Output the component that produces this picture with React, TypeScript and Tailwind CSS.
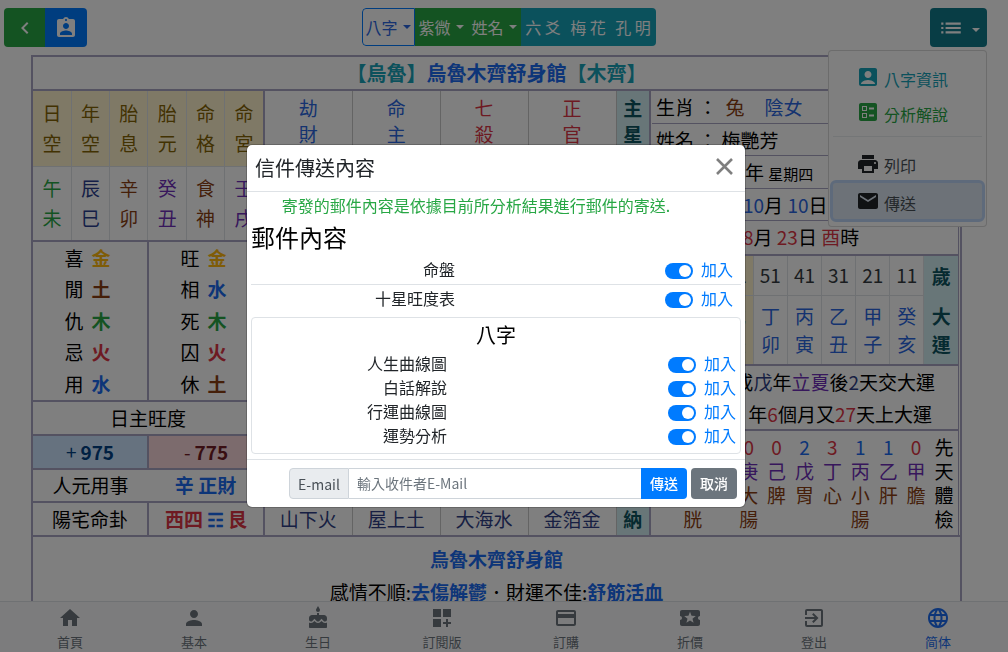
import React from "react";
import {
  MdAccountBox,
  MdAssignmentInd,
  MdBallot,
  MdCake,
  MdChevronLeft,
  MdCreditCard,
  MdDashboardCustomize,
  MdEmail,
  MdExitToApp,
  MdHome,
  MdLanguage,
  MdList,
  MdLocalActivity,
  MdPerson,
  MdPrint,
} from "react-icons/md";

const NAV_ITEMS = [
  { label: "首頁", icon: MdHome },
  { label: "基本", icon: MdPerson },
  { label: "生日", icon: MdCake },
  { label: "訂閱版", icon: MdDashboardCustomize },
  { label: "訂購", icon: MdCreditCard },
  { label: "折價", icon: MdLocalActivity },
  { label: "登出", icon: MdExitToApp },
  { label: "简体", icon: MdLanguage, active: true },
];

// Each entry is a column: header pair, value pair, value colour
const PALACES = [
  { head: "日空", value: "午未", color: "text-[#28a745]" },
  { head: "年空", value: "辰巳", color: "text-[#2b3f8f]" },
  { head: "胎息", value: "辛卯", color: "text-[#8b3f13]" },
  { head: "胎元", value: "癸丑", color: "text-[#6f2fb8]" },
  { head: "命格", value: "食神", color: "text-[#8b3f13]" },
  { head: "命宮", value: "壬戌", color: "text-[#6f2fb8]" },
];

const ELEMENT_COLORS: Record<string, string> = {
  金: "text-[#ffb90f]",
  土: "text-[#8b3f13]",
  木: "text-[#28a745]",
  火: "text-[#dc3545]",
  水: "text-[#1a6bf0]",
};

const LIKES = ["喜金", "閒土", "仇木", "忌火", "用水"];
const SEASONS = ["旺金", "相水", "死木", "囚火", "休土"];

const STARS = [
  { name: "劫財", color: "text-[#2a66e0]" },
  { name: "命主", color: "text-[#2a66e0]" },
  { name: "七殺", color: "text-[#dc3545]" },
  { name: "正官", color: "text-[#dc3545]" },
];

const NAYIN = ["山下火", "屋上土", "大海水", "金箔金"];

const LUCK = [
  { age: 81, pillar: "庚午" },
  { age: 71, pillar: "己巳" },
  { age: 61, pillar: "戊辰", current: true },
  { age: 51, pillar: "丁卯" },
  { age: 41, pillar: "丙寅" },
  { age: 31, pillar: "乙丑" },
  { age: 21, pillar: "甲子" },
  { age: 11, pillar: "癸亥" },
];

const ORGANS = [
  { count: 0, stem: "癸", organ: "腎" },
  { count: 0, stem: "壬", organ: "膀胱" },
  { count: 0, stem: "辛", organ: "肺" },
  { count: 0, stem: "庚", organ: "大腸" },
  { count: 0, stem: "己", organ: "脾" },
  { count: 2, stem: "戊", organ: "胃" },
  { count: 3, stem: "丁", organ: "心" },
  { count: 1, stem: "丙", organ: "小腸" },
  { count: 1, stem: "乙", organ: "肝" },
  { count: 0, stem: "甲", organ: "膽" },
];

const Caret = () => (
  <span className="ml-[5px] inline-block border-x-4 border-t-4 border-x-transparent border-t-current"></span>
);

const Stacked = ({ text }: { text: string }) => (
  <>
    {text.split("").map((ch) => (
      <span key={ch} className="block">
        {ch}
      </span>
    ))}
  </>
);

const Header = () => (
  <header className="relative z-10 flex h-[55px] shrink-0 items-start justify-between pt-2 pr-[21px] pl-1">
    <div className="flex overflow-hidden rounded">
      <button
        aria-label="返回"
        className="flex h-[39px] w-[41px] items-center justify-center bg-[#28a745] text-white"
      >
        <MdChevronLeft size={24} />
      </button>
      <button
        aria-label="命主資料"
        className="flex h-[39px] w-[42px] items-center justify-center bg-[#007bff] text-white"
      >
        <MdAssignmentInd size={24} />
      </button>
    </div>

    <div className="flex h-[38px] overflow-hidden rounded text-base text-white">
      <button className="flex w-[53px] items-center justify-center rounded-l border border-[#007bff] bg-white text-[#2a66e0]">
        八字
        <Caret />
      </button>
      <button className="flex w-[53px] items-center justify-center bg-[#28a745]">
        紫微
        <Caret />
      </button>
      <button className="flex w-[53px] items-center justify-center bg-[#28a745]">
        姓名
        <Caret />
      </button>
      {["六 爻", "梅 花", "孔 明"].map((name) => (
        <button key={name} className="w-[45px] bg-[#17a2b8]">
          {name}
        </button>
      ))}
    </div>

    <div className="relative">
      <button
        aria-label="功能選單"
        className="flex h-[39px] w-[57px] items-center justify-center rounded bg-[#117a8b] text-white"
      >
        <MdList size={26} />
        <span className="mt-1 ml-2 inline-block border-x-4 border-t-4 border-x-transparent border-t-current"></span>
      </button>
      <Menu />
    </div>
  </header>
);

const Menu = () => (
  <div className="absolute top-full right-0 mt-[3px] w-[159px] rounded border border-black/15 bg-white pt-[10px] pb-1 text-base">
    <button className="flex h-[35px] w-full items-center gap-1 pl-[27px] text-[#17a2b8]">
      <MdAccountBox size={24} className="mb-1" />
      八字資訊
    </button>
    <button className="flex h-[35px] w-full items-center gap-1 pl-[27px] text-[#28a745]">
      <MdBallot size={24} className="mb-1" />
      分析解說
    </button>
    <hr className="mx-1 mt-[5px] mb-3 border-[#e9ecef]" />
    <button className="flex h-[31px] w-full items-center gap-1 pl-[27px] text-[#495057]">
      <MdPrint size={24} className="mb-0.5 text-[#212529]" />
      列印
    </button>
    <button className="mx-px flex h-[42px] w-[155px] items-center gap-1 rounded-md border-[3px] border-[#bdd5f7] bg-[#dbe5f0] pt-[3px] pl-[23px] text-[#495057]">
      <MdEmail size={24} className="mb-1 text-[#212529]" />
      傳送
    </button>
  </div>
);

const Phases = ({ rows }: { rows: string[] }) => (
  <ul className="flex flex-1 flex-col pr-[5px]">
    {rows.map((row) => (
      <li key={row} className="flex flex-1 items-center justify-center gap-2">
        <span>{row[0]}</span>
        <b className={ELEMENT_COLORS[row[1]]}>{row[1]}</b>
      </li>
    ))}
  </ul>
);

const LeftPanel = () => (
  <div className="flex w-[232px] shrink-0 flex-col border-r-2 border-[#a9a4c2]">
    <table className="h-[149px] w-full table-fixed text-center leading-[30px]">
      <tbody>
        <tr>
          {PALACES.map((p) => (
            <td
              key={p.head}
              className="h-[75px] border-r border-b border-[#dee2e6] bg-[#fff3cd] text-[#856404] last:border-r-0"
            >
              <Stacked text={p.head} />
            </td>
          ))}
        </tr>
        <tr>
          {PALACES.map((p) => (
            <td
              key={p.value}
              className={`border-r border-[#dee2e6] last:border-r-0 ${p.color}`}
            >
              <Stacked text={p.value} />
            </td>
          ))}
        </tr>
      </tbody>
    </table>

    <div className="flex h-[162px] border-y-2 border-[#a9a4c2]">
      <Phases rows={LIKES} />
      <div className="w-0.5 bg-[#a9a4c2]"></div>
      <Phases rows={SEASONS} />
    </div>

    <div className="flex h-8 items-center justify-center">日主旺度</div>
    <div className="flex h-9 border-y-2 border-[#a9a4c2]">
      <div className="flex flex-1 items-center justify-center gap-1 bg-[#cce5ff] text-[#004085]">
        + <b>975</b>
      </div>
      <div className="w-0.5 bg-[#a9a4c2]"></div>
      <div className="flex flex-1 items-center justify-center gap-1 bg-[#f8d7da] text-[#721c24]">
        - <b>775</b>
      </div>
    </div>
    <div className="flex h-[31px] items-center text-center">
      <span className="flex-1">人元用事</span>
      <b className="flex-1 text-[#1a6bf0]">辛 正財</b>
    </div>
    <div className="flex h-[34px] border-t-2 border-[#a9a4c2]">
      <span className="flex flex-1 items-center justify-center">陽宅命卦</span>
      <div className="w-0.5 bg-[#a9a4c2]"></div>
      <b className="flex flex-1 items-center justify-center gap-1 text-[#dc3545]">
        西四 <span className="text-[#1a6bf0]">☶</span> 艮
      </b>
    </div>
  </div>
);

const PillarPanel = () => (
  <table className="min-w-0 flex-1 table-fixed border-r-2 border-[#a9a4c2] text-center">
    <colgroup>
      <col />
      <col />
      <col />
      <col />
      <col className="w-[34px]" />
    </colgroup>
    <tbody>
      <tr className="h-[60px] leading-[26px]">
        {STARS.map((s) => (
          <td
            key={s.name}
            className={`border-r border-b border-[#c8c8c8] ${s.color}`}
          >
            <Stacked text={s.name} />
          </td>
        ))}
        <th className="bg-[#d1ecf1] text-[#0c5460]">
          <Stacked text="主星" />
        </th>
      </tr>
      <tr className="h-[352px]">
        {STARS.map((s) => (
          <td key={s.name} className="border-r border-[#c8c8c8]"></td>
        ))}
        <td className="bg-[#d1ecf1]"></td>
      </tr>
      <tr className="h-8 text-[#2f3f86]">
        {NAYIN.map((n) => (
          <td key={n} className="border-r border-[#c8c8c8]">
            {n}
          </td>
        ))}
        <th className="bg-[#d1ecf1] text-[#0c5460]">納</th>
      </tr>
    </tbody>
  </table>
);

const RightPanel = () => (
  <div className="mr-px w-[308px] shrink-0 border-r border-[#a9a4c2]">
    <div className="grid h-[163px] grid-rows-5 divide-y divide-[#a9a4c2] pl-px leading-[31px] whitespace-pre [&>p]:pl-1">
      <p>
        生肖 ： <span className="ml-1 text-[#8b3f13]">兔</span>
        <span className="ml-5 text-[#2a66e0]">陰女</span>
      </p>
      <p>姓名 ： 梅艷芳</p>
      <p>
        <span className="ml-[89px]">年</span>{" "}
        <small className="text-[15px]">星期四</small>
      </p>
      <p>
        <span className="ml-[87px] text-[#2a66e0]">10</span>月{" "}
        <span className="text-[#2a66e0]">10</span>日
      </p>
      <p>
        <span className="ml-[87px] text-[#dc3545]">8</span>月{" "}
        <span className="text-[#dc3545]">23</span>日{" "}
        <span className="text-[#dc3545]">酉</span>時
      </p>
    </div>

    <table className="h-[112px] w-full table-fixed border-y-2 border-[#a9a4c2] text-center leading-7">
      <tbody>
        <tr className="h-10">
          {LUCK.map((l) => (
            <td
              key={l.age}
              className={`border-r border-b border-[#dee2e6] text-[#343a40] ${l.current ? "bg-[#fff3cd]" : ""}`}
            >
              {l.age}
            </td>
          ))}
          <th className="bg-[#d1ecf1] text-[#0c5460]">歲</th>
        </tr>
        <tr>
          {LUCK.map((l) => (
            <td
              key={l.age}
              className={`border-r border-[#dee2e6] text-[#2a66e0] ${l.current ? "bg-[#fff3cd]" : ""}`}
            >
              <Stacked text={l.pillar} />
            </td>
          ))}
          <th className="bg-[#d1ecf1] text-[#0c5460]">
            <Stacked text="大運" />
          </th>
        </tr>
      </tbody>
    </table>

    <div className="h-[65px] border-b-2 border-[#a9a4c2] leading-8">
      <p className="pr-[23px] text-right">
        或<span className="text-[#2f3f86]">戊</span>年
        <span className="text-[#6f2fb8]">立夏</span>後
        <span className="text-[#2f3f86]">2</span>天交大運
      </p>
      <p className="pr-[26px] text-right">
        年<span className="text-[#dc3545]">6</span>個月又
        <span className="text-[#dc3545]">27</span>天上大運
      </p>
    </div>

    <table className="mt-1 w-full table-fixed text-center leading-6">
      <tbody>
        <tr className="align-top">
          {ORGANS.map((o) => (
            <td key={o.stem} className="text-[#8b3f13]">
              <span
                className={
                  o.count === 1 || o.count === 2
                    ? "block text-[#1a6bf0]"
                    : "block text-[#dc3545]"
                }
              >
                {o.count}
              </span>
              <span className="block text-[#6f2fb8]">{o.stem}</span>
              <Stacked text={o.organ} />
            </td>
          ))}
          <td>
            <Stacked text="先天體檢" />
          </td>
        </tr>
      </tbody>
    </table>
  </div>
);

const Chart = () => (
  <main className="min-h-0 flex-1 overflow-hidden pr-4">
    <div className="mr-[30px] ml-[31px] border-2 border-[#a9a4c2] text-[19px] text-black">
      <h1 className="flex h-[34px] items-center justify-center border-b-2 border-[#a9a4c2] text-xl font-bold text-[#17a2b8]">
        【烏魯】<span className="text-[#1a6bf0]">烏魯木齊舒身館</span>【木齊】
      </h1>
      <div className="flex h-[446px] border-b-2 border-[#a9a4c2]">
        <LeftPanel />
        <PillarPanel />
        <RightPanel />
      </div>
      <div className="pt-[5px] pb-4 text-center leading-[33px]">
        <p className="font-bold text-[#1a6bf0]">烏魯木齊舒身館</p>
        <p>
          感情不順:<b className="text-[#1a6bf0]">去傷解鬱</b>．財運不佳:
          <b className="text-[#1a6bf0]">舒筋活血</b>
        </p>
      </div>
    </div>
  </main>
);

const BottomNav = () => (
  <nav className="z-10 grid h-[51px] shrink-0 grid-cols-8 border-t border-[#dee2e6] bg-[#f8f9fa] px-2">
    {NAV_ITEMS.map(({ label, icon: Icon, active }) => (
      <a
        key={label}
        href="#"
        className={`flex flex-col items-center pt-1 text-[13px] leading-[23px] ${active ? "text-[#1a6bf0]" : "text-[#6c757d]"}`}
      >
        <Icon size={24} className="shrink-0" />
        {label}
      </a>
    ))}
  </nav>
);

const SwitchRow = ({
  label,
  nested,
  className = "",
}: {
  label: string;
  nested?: boolean;
  className?: string;
}) => (
  <label
    className={`flex items-center text-base leading-6 ${nested ? "pr-1" : "pr-2"} ${className}`}
  >
    <span className="flex-1 text-right">{label}</span>
    <span
      className={`flex items-center justify-end gap-2 text-[#007bff] ${nested ? "w-[289px]" : "w-[278px]"}`}
    >
      <input
        type="checkbox"
        defaultChecked
        className="mt-1 h-4 w-7 appearance-none rounded-full bg-[#adb5bd] before:mt-0.5 before:ml-0.5 before:block before:size-3 before:rounded-full before:bg-white checked:bg-[#007bff] checked:before:ml-3.5"
      />
      加入
    </span>
  </label>
);

const MailDialog = () => (
  <div className="fixed inset-0 z-20 flex items-start justify-center bg-black/50 pt-36 pr-4">
    <div
      role="dialog"
      aria-labelledby="mail-title"
      className="w-full max-w-[500px] rounded-md border border-black/20 bg-white bg-clip-padding text-[#212529]"
    >
      <div className="flex h-[47px] items-center justify-between border-b border-[#dee2e6] pr-3 pl-2">
        <h2 id="mail-title" className="text-xl">
          信件傳送內容
        </h2>
        <button aria-label="關閉" className="mb-1 text-[#7f7f7f]">
          <svg width="17" height="17" viewBox="0 0 17 17">
            <path
              d="M1 1L16 16M16 1L1 16"
              stroke="currentColor"
              strokeWidth="2.6"
            />
          </svg>
        </button>
      </div>

      <div className="px-1 pt-px pb-[5px]">
        <p className="pr-10 text-center text-base text-[#28a745]">
          寄發的郵件內容是依據目前所分析結果進行郵件的寄送.
        </p>
        <h3 className="mt-1 text-2xl leading-8 text-black">郵件內容</h3>
        <SwitchRow
          label="命盤"
          className="mt-1 border-b border-[#dee2e6] pb-[3px]"
        />
        <SwitchRow label="十星旺度表" className="pt-px" />
        <div className="mt-[7px] rounded border border-[#dee2e6] pt-0.5 pb-1.5">
          <h4 className="mb-px text-center text-xl leading-[30px] text-black">
            八字
          </h4>
          <SwitchRow nested label="人生曲線圖" />
          <SwitchRow nested label="白話解說" />
          <SwitchRow nested label="行運曲線圖" />
          <SwitchRow nested label="運勢分析" />
        </div>
      </div>

      <form
        className="flex border-t border-[#dee2e6] py-2 pr-2 pl-[42px] text-sm"
        onSubmit={(e) => e.preventDefault()}
      >
        <label
          htmlFor="mail-to"
          className="flex h-[31px] w-[60px] items-center justify-center rounded-l-sm border border-[#ced4da] bg-[#e9ecef] text-[#495057]"
        >
          E-mail
        </label>
        <input
          id="mail-to"
          type="email"
          placeholder="輸入收件者E-Mail"
          className="h-[31px] min-w-0 flex-1 border-y border-[#ced4da] px-2 pb-0.5 placeholder:text-[#6c757d]"
        />
        <button
          type="submit"
          className="h-[31px] w-[46px] rounded-r-sm bg-[#007bff] pb-0.5 font-medium text-white"
        >
          傳送
        </button>
        <button
          type="button"
          className="ml-1 h-[31px] w-[46px] rounded-sm bg-[#6c757d] pb-0.5 font-medium text-white"
        >
          取消
        </button>
      </form>
    </div>
  </div>
);

export default function App() {
  return (
    <div className="flex h-screen flex-col bg-white font-['Noto_Sans_CJK_TC',sans-serif]">
      <Header />
      <Chart />
      <BottomNav />
      <MailDialog />
    </div>
  );
}
